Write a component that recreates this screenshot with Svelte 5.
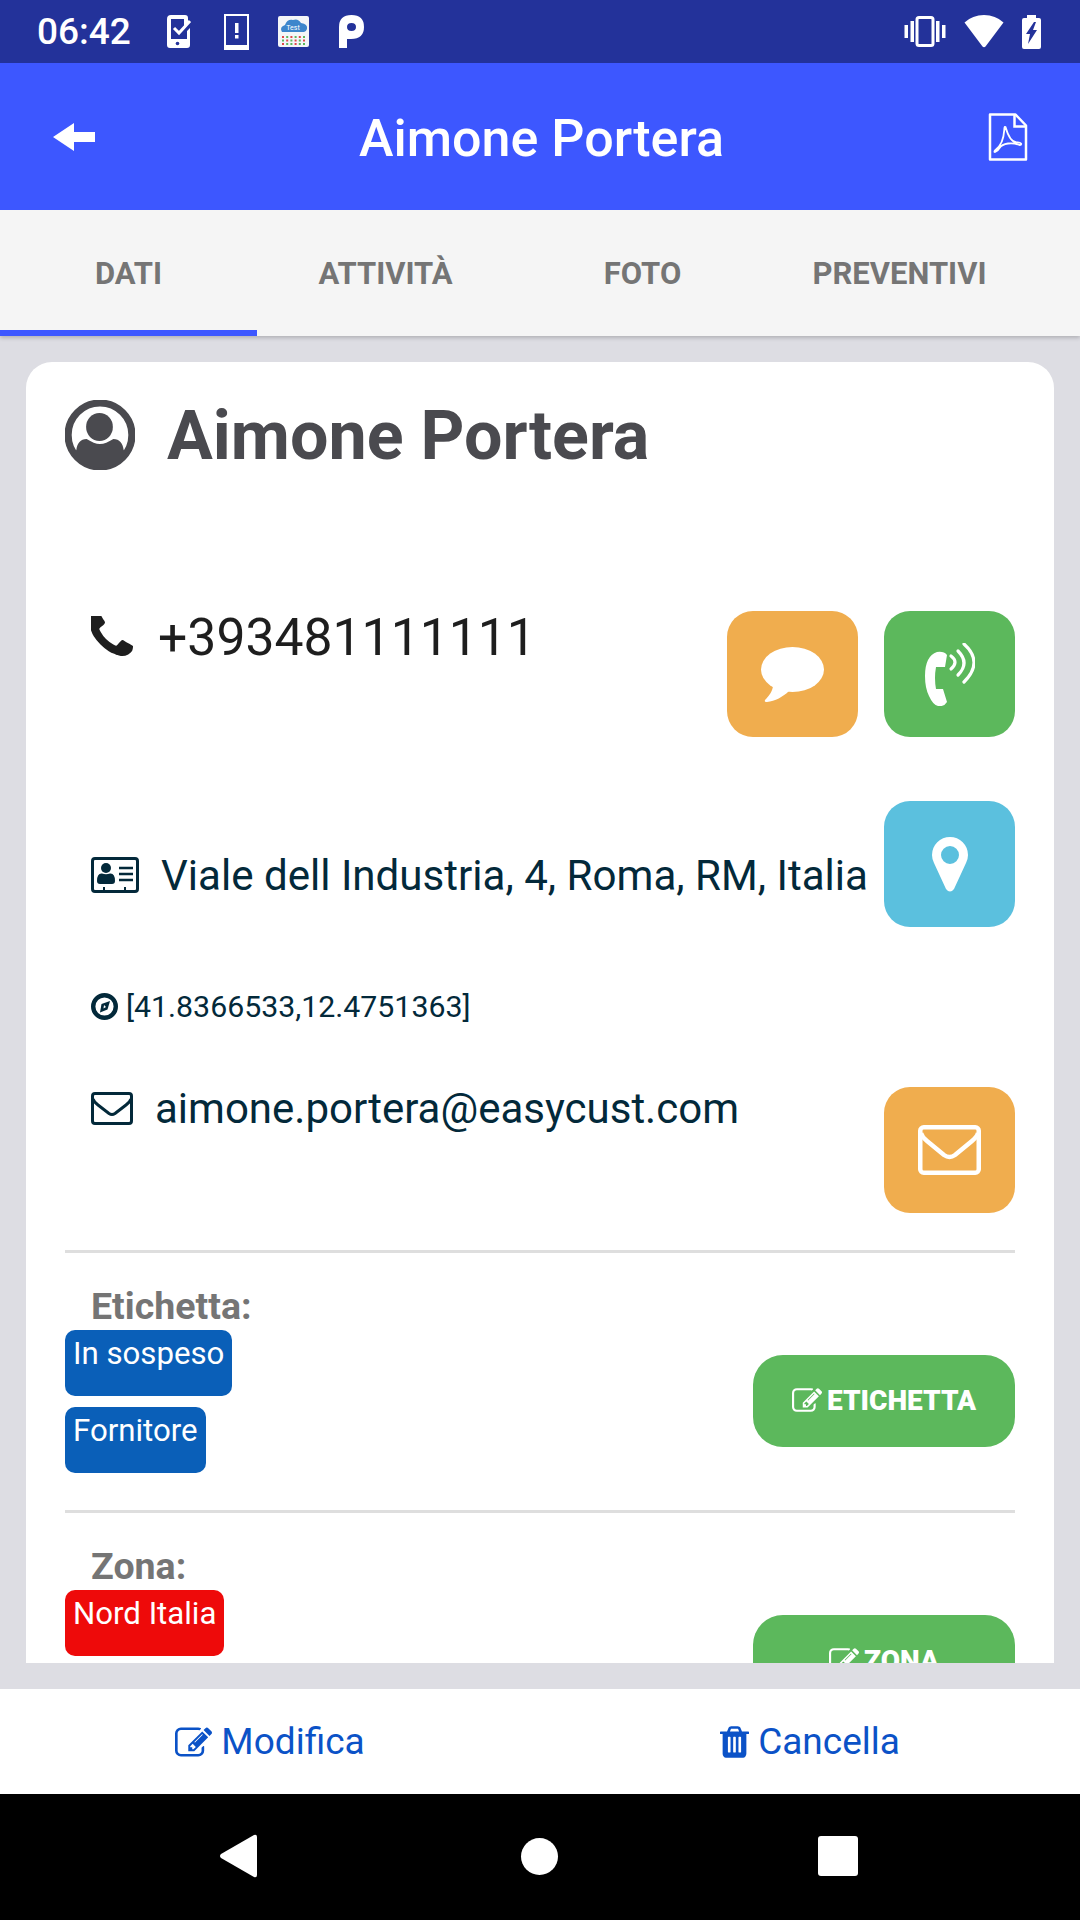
<script>
  const TABS = ['DATI', 'ATTIVITÀ', 'FOTO', 'PREVENTIVI'];
  const PENCIL = 'M888 1184l116-116-152-152-116 116v56h96v96h56zm440-720q-16-16-33 1l-350 350q-17 17-1 33t33-1l350-350q17-17 1-33zm80 594v190q0 119-84.5 203.5t-203.5 84.5h-832q-119 0-203.5-84.5t-84.5-203.5v-832q0-119 84.5-203.5t203.5-84.5h832q63 0 117 25 15 7 18 23 3 17-9 29l-49 49q-14 14-32 8-23-6-45-6h-832q-66 0-113 47t-47 113v832q0 66 47 113t113 47h832q66 0 113-47t47-113v-126q0-13 9-22l64-64q15-15 35-7t20 29zm-96-738l288 288-672 672h-288v-288zm444 132l-92 92-288-288 92-92q28-28 68-28t68 28l152 152q28 28 28 68t-28 68z';
  const TRASH = 'M704 1376v-704q0-14-9-23t-23-9h-64q-14 0-23 9t-9 23v704q0 14 9 23t23 9h64q14 0 23-9t9-23zm256 0v-704q0-14-9-23t-23-9h-64q-14 0-23 9t-9 23v704q0 14 9 23t23 9h64q14 0 23-9t9-23zm256 0v-704q0-14-9-23t-23-9h-64q-14 0-23 9t-9 23v704q0 14 9 23t23 9h64q14 0 23-9t9-23zm-544-992h448l-48-117q-7-9-17-11h-317q-10 2-17 11zm928 32v64q0 14-9 23t-23 9h-96v948q0 83-47 143.5t-113 60.5h-832q-66 0-113-58.5t-47-141.5v-952h-96q-14 0-23-9t-9-23v-64q0-14 9-23t23-9h309l70-167q15-37 54-63t79-26h320q40 0 79 26t54 63l70 167h309q14 0 23 9t9 23z';
  const PHONE = 'M1600 1240q0 27-10 70.5t-21 68.5q-21 50-122 106-94 51-186 51-27 0-53-3.5t-57.5-12.5-47-14.5-55.5-20.5-49-18q-98-35-175-83-127-79-264-216t-216-264q-48-77-83-175-3-9-18-49t-20.5-55.5-14.5-47-12.5-57.5-3.5-53q0-92 51-186 56-101 106-122 25-11 68.5-21t70.5-10q14 0 21 3 18 6 53 76 11 19 30 54t35 63.5 31 53.5q3 4 17.5 25t21.5 35.5 7 28.5q0 20-28.5 50t-62 55-62 53-28.5 46q0 9 5 22.5t8.5 20.5 14 24 11.5 19q76 137 174 235t235 174q2 1 19 11.5t24 14 20.5 8.5 22.5 5q18 0 46-28.5t53-62 55-62 50-28.5q14 0 28.5 7t35.5 21.5 25 17.5q25 15 53.5 31t63.5 35 54 30q70 35 76 53 3 7 3 21z';
  const DOTS = [0, 1, 2, 3, 4, 5];
</script>

<div class="screen">
  <div class="status">
    <span class="time">06:42</span>
    <div class="notif">
      <svg width="26" height="33" viewBox="0 0 26 33" fill="#fff">
        <path d="M4 0h14q3 0 3 3v5l-4 4V4H4v20h16v-8l3-3v17q0 3-3 3H3q-3 0-3-3V4q0-4 4-4z" fill-rule="evenodd" />
        <circle cx="10.500" cy="28.500" r="1.800" fill="#23329a" />
        <path d="M7 13l5 5L23 6" fill="none" stroke="#fff" stroke-width="3" />
      </svg>
      <svg class="n-alert" width="25" height="36" viewBox="0 0 25 36" fill="#fff">
        <path fill-rule="evenodd" d="M0 0h25v36H0zM2 2v29h21V2z" />
        <rect x="11" y="9" width="3.500" height="10" />
        <rect x="11" y="21" width="3.500" height="3.500" />
      </svg>
      <svg class="n-test" width="31" height="31" viewBox="0 0 31 31">
        <rect width="31" height="31" rx="2" fill="#f4f6f8" />
        <path d="M4 16q-3-5 3-7 2-6 8-5 5-2 8 3 7 1 6 6-1 3-3 3z" fill="#3d86cc" />
        <text x="15" y="14" class="n-test-text">Test</text>
        {#each DOTS as d}
          <rect x={4 + d * 4.2} y="20" width="2" height="2" fill={d % 2 ? '#5cb85c' : '#e0484a'} />
          <rect x={4 + d * 4.2} y="23.5" width="2" height="2" fill={d % 2 ? '#e0484a' : '#5cb85c'} />
          <rect x={4 + d * 4.2} y="27" width="2" height="2" fill={d % 3 ? '#5cb85c' : '#e0484a'} />
        {/each}
      </svg>
      <svg class="n-p" width="25" height="33" viewBox="0 0 25 33" fill="#fff">
        <path fill-rule="evenodd" d="M0 33V12Q0 0 12.500 0T25 12 12 24H8v9zM8 12q0 4 4.500 4t4.500-4-4.500-4T8 12z" />
      </svg>
    </div>
    <div class="sys">
      <svg width="42" height="31" viewBox="0 0 41 31" fill="#fff">
        <rect x="0" y="9" width="3.500" height="13" />
        <rect x="6" y="5" width="3.500" height="21" />
        <rect x="37.500" y="9" width="3.500" height="13" />
        <rect x="31.500" y="5" width="3.500" height="21" />
        <rect x="12.500" y="1.500" width="16" height="28" rx="2" fill="none" stroke="#fff" stroke-width="3" />
      </svg>
      <svg width="40" height="33" viewBox="0 0 39 33" fill="#fff">
        <path d="M19.500 0Q31 0 39 7.500L21 31.500q-1.500 1.500-3 0L0 7.500Q8 0 19.500 0z" />
      </svg>
      <svg width="19" height="34" viewBox="0 0 19 34" fill="#fff">
        <path d="M5 0h9v3h3q2 0 2 2v27q0 2-2 2H2q-2 0-2-2V5q0-2 2-2h3z" />
        <path d="M12 7L4 19h4l-2 10 9-14h-4l3-8z" fill="#23329a" />
      </svg>
    </div>
  </div>

  <header class="appbar">
    <svg width="42" height="28" viewBox="0 0 40 28" fill="#fff" preserveAspectRatio="none"><path d="M0 14L20 0v9h20v10H20v9z" /></svg>
    <h1>Aimone Portera</h1>
    <svg width="40" height="48" viewBox="0 0 39 48" fill="none" stroke="#fff">
      <path d="M1.500 1.500H27L37.500 12.500V46.500H1.500z" stroke-width="2.500" stroke-linejoin="round" />
      <path d="M26 1.500V13.500H37.500" stroke-width="2.500" />
      <path d="M17 14C14 12 19 28 7 37C4 40 8 40 11 35C14 30 24 29 31 32C34 32 33 29 28 29.500C22 29 19 21 17 14z" stroke-width="1.800" />
    </svg>
  </header>

  <nav class="tabs">
    {#each TABS as t, i}
      <div class="tab" class:active={i === 0}>{t}</div>
    {/each}
  </nav>

  <main class="content">
    <div class="scroller">
      <section class="card">
        <div class="title">
          <svg width="70" height="70" viewBox="0 0 68 70" preserveAspectRatio="none">
            <ellipse cx="34" cy="35" rx="31" ry="32" fill="#fff" stroke="#4a4a4f" stroke-width="7" />
            <ellipse cx="33.500" cy="27" rx="13" ry="14" fill="#4a4a4f" />
            <path d="M11 50C12 43 15 39 21 39C26 42 30 44 34 44C38 44 42 42 47 39C53 39 56 43 57 50L60 53A31 32 0 0 1 8 53z" fill="#4a4a4f" />
          </svg>
          <h2>Aimone Portera</h2>
        </div>

        <div class="row row-phone">
          <div class="info phone">
            <svg width="42" height="42" viewBox="256 256 1344 1344" fill="#1e1e1e"><path d={PHONE} /></svg>
            <span>+393481111111</span>
          </div>
          <div class="actions">
            <button class="sq orange" aria-label="SMS">
              <svg width="63" height="55" viewBox="0 0 63 55" fill="#fff">
                <ellipse cx="31.500" cy="22.500" rx="31.500" ry="22.500" />
                <path d="M12 38C12 44 8 49 4 53Q3 55 6 55C14 54 22 50 28 44z" />
              </svg>
            </button>
            <button class="sq green" aria-label="Chiama">
              <svg width="50" height="63" viewBox="0 0 50 63">
                <path d="M12 9Q19 8 22 12L20 24H11Q9 35 11 46H18L22 59Q19 64 13 63Q8 62 4 53Q0 45 0 33Q0 13 12 9z" fill="#fff" />
                <g fill="none" stroke="#fff" stroke-width="3.200" stroke-linecap="round">
                  <path d="M26 13Q34 19 26 26" />
                  <path d="M33 8Q45 20 33 32" />
                  <path d="M39 1Q59 19 39 39" />
                </g>
              </svg>
            </button>
          </div>
        </div>

        <div class="row row-address">
          <div class="info address">
            <svg width="48" height="36" viewBox="0 0 48 36">
              <rect x="1.500" y="1.500" width="45" height="33" rx="2.500" fill="none" stroke="#03293a" stroke-width="3" />
              <circle cx="15" cy="11" r="5" fill="#03293a" />
              <path d="M6 24Q6 16 11 16.500Q15 18 19 16.500Q24 16 24 24Q24 27 21 27H9Q6 27 6 24z" fill="#03293a" />
              <path d="M28 11h14M28 17h14M28 23h14" stroke="#03293a" stroke-width="2.500" />
              <path d="M13 30v4M34 30v4" stroke="#03293a" stroke-width="2" />
            </svg>
            <span>Viale dell Industria, 4, Roma, RM, Italia</span>
          </div>
          <button class="sq blue" aria-label="Mappa">
            <svg width="36" height="55" viewBox="0 0 36 55" fill="#fff">
              <path fill-rule="evenodd" d="M18 0A18 18 0 0 1 36 18Q36 22 34 26L22 52Q18 57 14 52L2 26Q0 22 0 18A18 18 0 0 1 18 0zM18 9A9 9 0 1 0 18 27A9 9 0 1 0 18 9z" />
            </svg>
          </button>
        </div>

        <div class="coords">
          <svg width="27" height="27" viewBox="0 0 27 27">
            <circle cx="13.500" cy="13.500" r="11.300" fill="none" stroke="#03293a" stroke-width="4.400" />
            <path d="M19 8L16.500 16.500L9 19.500L10.500 11z" fill="#03293a" />
            <path d="M13 12L15 14L12.500 15.500z" fill="#fff" />
          </svg>
          <span>[41.8366533,12.4751363]</span>
        </div>

        <div class="row row-mail">
          <div class="info mail">
            <svg width="42" height="33" viewBox="0 0 42 33" fill="none" stroke="#03293a" stroke-width="3">
              <rect x="1.500" y="1.500" width="39" height="30" rx="2.500" />
              <path d="M2 7Q3 10 7 13L18 21.500Q21 23.500 24 21.500L35 13Q39 10 40 7" />
            </svg>
            <span>aimone.portera@easycust.com</span>
          </div>
          <button class="sq orange" aria-label="Email">
            <svg width="63" height="50" viewBox="0 0 63 50" fill="none" stroke="#fff" stroke-width="4.500">
              <rect x="2.250" y="2.250" width="58.500" height="45.500" rx="3.500" />
              <path d="M3 8Q4 12 9 16L26 30Q31.500 34 37 30L54 16Q59 12 60 8" />
            </svg>
          </button>
        </div>

        <hr />

        <div class="tag-row">
          <div class="tags">
            <div class="label">Etichetta:</div>
            <span class="badge">In sospeso</span>
            <span class="badge">Fornitore</span>
          </div>
          <button class="edit">
            <svg width="30" height="24" viewBox="0 128 1784 1408" fill="#fff"><path d={PENCIL} /></svg>
            ETICHETTA
          </button>
        </div>

        <hr />

        <div class="tag-row">
          <div class="tags">
            <div class="label">Zona:</div>
            <span class="badge red">Nord Italia</span>
          </div>
          <button class="edit">
            <svg width="30" height="24" viewBox="0 128 1784 1408" fill="#fff"><path d={PENCIL} /></svg>
            ZONA
          </button>
        </div>
      </section>
    </div>
  </main>

  <footer class="bottom">
    <div class="bottom-item">
      <svg width="37" height="30" viewBox="0 128 1784 1408" fill="#0b52c7"><path d={PENCIL} /></svg>
      Modifica
    </div>
    <div class="bottom-item">
      <svg width="29" height="32" viewBox="192 128 1408 1536" fill="#0b52c7"><path d={TRASH} /></svg>
      Cancella
    </div>
  </footer>

  <div class="navbar">
    <svg width="38" height="44" viewBox="0 0 38 44" fill="#fff"><path d="M1 20L34 1q3-1 3 2v38q0 3-3 2L1 24q-2-2 0-4z" /></svg>
    <span class="nav-home"></span>
    <span class="nav-square"></span>
  </div>
</div>

<style>
  :global(body) {
    margin: 0;
    font-family: Roboto, sans-serif;
  }
  .screen {
    width: 1080px;
    height: 1920px;
    display: flex;
    flex-direction: column;
    background: #dddde3;
    overflow: hidden;
  }
  .status {
    height: 63px;
    flex: none;
    display: flex;
    align-items: center;
    background: #23329a;
    color: #fff;
    padding: 0 39px 0 37px;
  }
  .time {
    font-size: 37px;
    font-weight: 500;
    width: 130px;
  }
  .notif {
    display: flex;
    align-items: center;
    flex: 1;
  }
  .n-alert {
    margin-left: 31px;
  }
  .n-test {
    margin-left: 29px;
  }
  .n-p {
    margin-left: 30px;
  }
  .n-test-text {
    font-size: 7px;
    fill: #fff;
    text-anchor: middle;
  }
  .sys {
    display: flex;
    align-items: center;
    gap: 18px;
  }
  .appbar {
    height: 147px;
    flex: none;
    display: flex;
    align-items: center;
    justify-content: space-between;
    padding: 0 52px 0 53px;
    background: #3d57ff;
    position: relative;
    z-index: 2;
  }
  h1 {
    margin: 3px 0 0;
    font-size: 52px;
    font-weight: 500;
    color: #fff;
  }
  .tabs {
    height: 126px;
    flex: none;
    display: grid;
    grid-template-columns: repeat(4, 257px);
    background: #f5f5f5;
    box-shadow: 0 2px 4px rgba(0, 0, 0, 0.2);
    position: relative;
    z-index: 1;
  }
  .tab {
    display: flex;
    align-items: center;
    justify-content: center;
    font-size: 31px;
    font-weight: 700;
    color: #757575;
  }
  .active {
    box-shadow: inset 0 -6px #3d57ff;
  }
  .content {
    flex: 1;
    min-height: 0;
    padding: 26px;
    display: flex;
  }
  .scroller {
    flex: 1;
    overflow: hidden;
  }
  .card {
    background: #fff;
    border-radius: 26px 26px 0 0;
    padding: 38px 39px 30px;
  }
  .title {
    display: flex;
    align-items: center;
    gap: 32px;
    height: 70px;
  }
  h2 {
    margin: 2px 0 0;
    font-size: 68.200px;
    font-weight: 700;
    color: #4a4a4f;
  }
  .row {
    display: flex;
    justify-content: space-between;
  }
  .row-phone {
    margin-top: 141px;
  }
  .row-address {
    margin-top: 64px;
    align-items: center;
  }
  .row-mail {
    margin-top: 61px;
  }
  .info {
    display: flex;
    align-items: center;
    margin-left: 26px;
  }
  .phone {
    height: 52px;
    gap: 25px;
    font-size: 51.700px;
    color: #1e1e1e;
  }
  .address {
    gap: 22px;
    font-size: 42.100px;
    color: #03293a;
    margin-top: 22px;
  }
  .mail {
    gap: 22px;
    font-size: 42px;
    color: #03293a;
    height: 43px;
  }
  .coords {
    display: flex;
    align-items: center;
    gap: 8px;
    height: 40px;
    margin: 59px 0 0 26px;
    font-size: 30.300px;
    color: #03293a;
  }
  .actions {
    display: flex;
    gap: 26px;
  }
  button {
    border: 0;
    padding: 0;
    font: inherit;
  }
  .sq {
    width: 131px;
    height: 126px;
    flex: none;
    border-radius: 26px;
    display: flex;
    align-items: center;
    justify-content: center;
  }
  .orange {
    background: #f0ad4e;
  }
  .green {
    background: #5cb85c;
  }
  .blue {
    background: #5bc0de;
  }
  hr {
    border: 0;
    height: 3px;
    background: #dedede;
    margin: 37px 0 0;
  }
  .tag-row {
    display: flex;
    justify-content: space-between;
    align-items: flex-start;
  }
  .tags {
    display: flex;
    flex-direction: column;
    align-items: flex-start;
    padding-top: 31px;
  }
  .label {
    margin-left: 26px;
    margin-bottom: 2px;
    font-size: 37.500px;
    font-weight: 700;
    line-height: 44px;
    color: #757575;
  }
  .badge {
    height: 66px;
    box-sizing: border-box;
    padding: 4px 8px 0;
    background: #0a5fb8;
    border-radius: 10px;
    color: #fff;
    font-size: 31.200px;
    line-height: 40px;
    margin-bottom: 11px;
  }
  .badge:last-child {
    margin-bottom: 0;
  }
  .red {
    background: #ee0a0a;
  }
  .edit {
    width: 262px;
    height: 92px;
    margin-top: 102px;
    padding-bottom: 2px;
    border-radius: 30px;
    background: #5cb85c;
    color: #fff;
    font-size: 28px;
    font-weight: 900;
    display: flex;
    align-items: center;
    justify-content: center;
    gap: 5px;
  }
  .bottom {
    height: 105px;
    flex: none;
    display: flex;
    background: #fff;
  }
  .bottom-item {
    flex: 1;
    display: flex;
    align-items: center;
    justify-content: center;
    gap: 9px;
    font-size: 37px;
    color: #0b52c7;
  }
  .navbar {
    height: 126px;
    box-sizing: border-box;
    flex: none;
    background: #000;
    display: flex;
    align-items: center;
    padding: 0 0 2px 220px;
  }
  .nav-home {
    width: 37px;
    height: 37px;
    margin: 0 260px 0 263px;
    border-radius: 50%;
    background: #fff;
  }
  .nav-square {
    width: 40px;
    height: 40px;
    border-radius: 3px;
    background: #fff;
  }
</style>
